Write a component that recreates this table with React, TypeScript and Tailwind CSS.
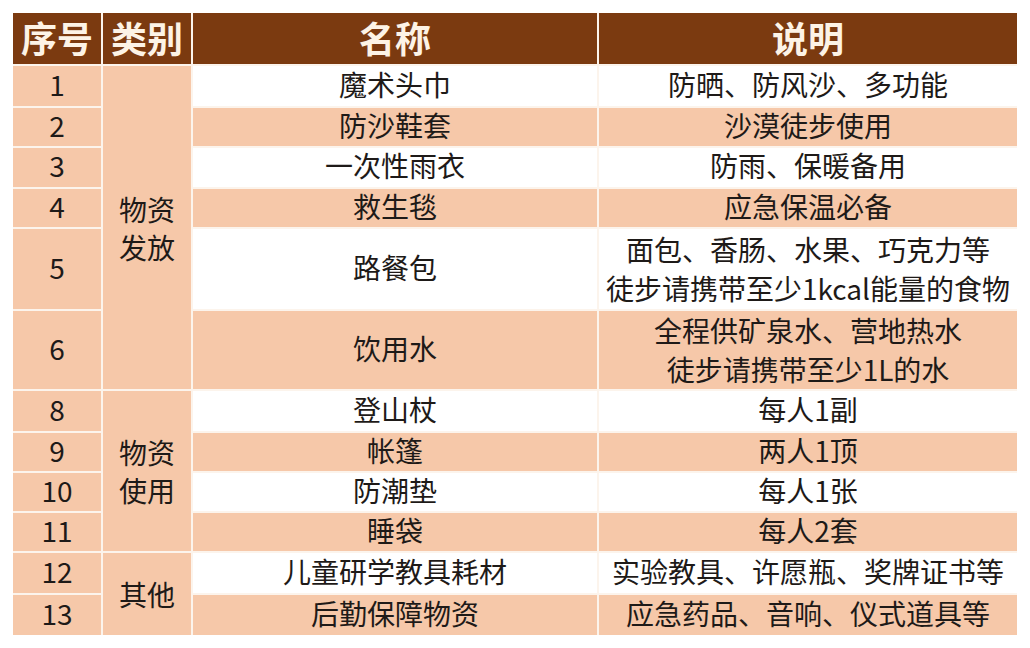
import React from "react";

const font = { fontFamily: '"Noto Sans CJK SC", "Noto Sans", sans-serif' };

type Row = { no: string; name: string; desc: string[]; tall?: boolean; cat?: { text: string[]; span: string } };

const rows: Row[] = [
  { no: "1", name: "魔术头巾", desc: ["防晒、防风沙、多功能"], cat: { text: ["物资", "发放"], span: "row-span-6" } },
  { no: "2", name: "防沙鞋套", desc: ["沙漠徒步使用"] },
  { no: "3", name: "一次性雨衣", desc: ["防雨、保暖备用"] },
  { no: "4", name: "救生毯", desc: ["应急保温必备"] },
  { no: "5", name: "路餐包", desc: ["面包、香肠、水果、巧克力等", "徒步请携带至少1kcal能量的食物"], tall: true },
  { no: "6", name: "饮用水", desc: ["全程供矿泉水、营地热水", "徒步请携带至少1L的水"], tall: true },
  { no: "8", name: "登山杖", desc: ["每人1副"], cat: { text: ["物资", "使用"], span: "row-span-4" } },
  { no: "9", name: "帐篷", desc: ["两人1顶"] },
  { no: "10", name: "防潮垫", desc: ["每人1张"] },
  { no: "11", name: "睡袋", desc: ["每人2套"] },
  { no: "12", name: "儿童研学教具耗材", desc: ["实验教具、许愿瓶、奖牌证书等"], cat: { text: ["其他"], span: "row-span-2" } },
  { no: "13", name: "后勤保障物资", desc: ["应急药品、音响、仪式道具等"] },
];

export default function App() {
  return (
    <div className="w-[1030px] h-[648px] bg-white pt-[13px] pl-[13px]" style={font}>
      <div className="grid grid-cols-[88px_88px_404px_418px] grid-rows-[51px_40px_38px_39px_38px_80px_78px_40px_38px_38px_38px_40px_40px] gap-[2px] w-[1004px] bg-[#fcf4ec] text-[28px] text-[#1e1a18]">
        {["序号", "类别", "名称", "说明"].map((h) => (
          <div key={h} className="bg-[#7b3a10] text-[#fdf3e6] font-bold text-[36px] flex items-center justify-center leading-none pb-[4px]">
            {h}
          </div>
        ))}
        {rows.map((r, i) => {
          const light = i % 2 === 0;
          const cellBg = light ? "bg-white" : "bg-[#f6c8a9]";
          return (
            <React.Fragment key={r.no}>
              <div className="col-start-1 bg-[#f6c8a9] flex items-center justify-center leading-none pb-[5px]">{r.no}</div>
              {r.cat && (
                <div className={`col-start-2 ${r.cat.span} bg-[#f6c8a9] flex flex-col items-center justify-center leading-[38px]`}>
                  {r.cat.text.map((t) => (
                    <span key={t}>{t}</span>
                  ))}
                </div>
              )}
              <div className={`col-start-3 ${cellBg} flex items-center justify-center leading-none pb-[5px]`}>{r.name}</div>
              {r.tall ? (
                <div className={`col-start-4 ${cellBg} flex flex-col items-center justify-center leading-[39px]`}>
                  {r.desc.map((d) => (
                    <span key={d}>{d}</span>
                  ))}
                </div>
              ) : (
                <div className={`col-start-4 ${cellBg} flex items-center justify-center leading-none pb-[5px]`}>{r.desc[0]}</div>
              )}
            </React.Fragment>
          );
        })}
      </div>
    </div>
  );
}
